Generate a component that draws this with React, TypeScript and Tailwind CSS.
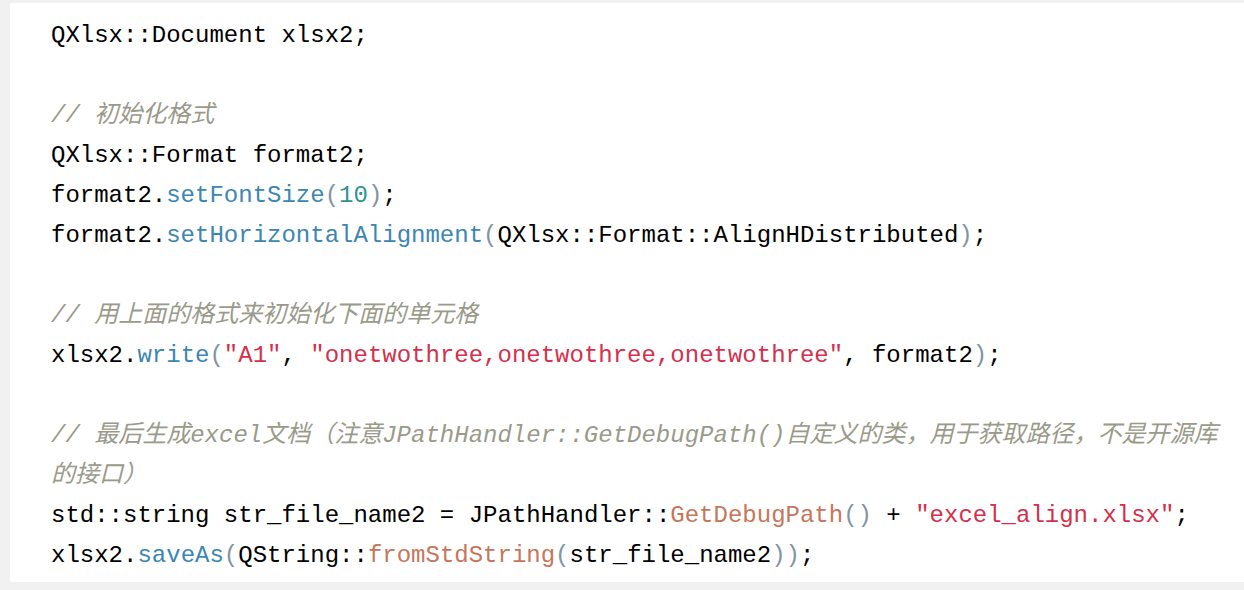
type Tok = [string, string?]

const C = {
  fn: "text-[#3b86b3]",
  num: "text-[#2f9490]",
  str: "text-[#d4304c]",
  call: "text-[#c6765a]",
  punc: "text-[#8094a4]",
  cm: "text-[#9a9a8a] italic",
}

const lines: Tok[][] = [
  [["QXlsx::Document xlsx2;"]],
  [],
  [["// 初始化格式", C.cm]],
  [["QXlsx::Format format2;"]],
  [["format2."], ["setFontSize", C.fn], ["(", C.punc], ["10", C.num], [")", C.punc], [";"]],
  [
    ["format2."],
    ["setHorizontalAlignment", C.fn],
    ["(", C.punc],
    ["QXlsx::Format::AlignHDistributed"],
    [")", C.punc],
    [";"],
  ],
  [],
  [["// 用上面的格式来初始化下面的单元格", C.cm]],
  [
    ["xlsx2."],
    ["write", C.fn],
    ["(", C.punc],
    ['"A1"', C.str],
    [", "],
    ['"onetwothree,onetwothree,onetwothree"', C.str],
    [", format2"],
    [")", C.punc],
    [";"],
  ],
  [],
  [["// 最后生成excel文档（注意JPathHandler::GetDebugPath()自定义的类，用于获取路径，不是开源库", C.cm]],
  [["的接口）", C.cm]],
  [
    ["std::string str_file_name2 = JPathHandler::"],
    ["GetDebugPath", C.call],
    ["()", C.punc],
    [" + "],
    ['"excel_align.xlsx"', C.str],
    [";"],
  ],
  [
    ["xlsx2."],
    ["saveAs", C.fn],
    ["(", C.punc],
    ["QString::"],
    ["fromStdString", C.call],
    ["(", C.punc],
    ["str_file_name2"],
    ["))", C.punc],
    [";"],
  ],
]

export default function App() {
  return (
    <div className="w-[1244px] h-[590px] bg-[#f1f1f1] pt-[3px] pl-[10px] overflow-hidden">
      <div
        className="bg-white h-[579px] pl-[41px] pt-[13px] text-[24px] leading-[40px] text-black whitespace-pre"
        style={{ fontFamily: '"Liberation Mono", "Noto Sans CJK SC", monospace' }}
      >
        {lines.map((toks, i) => (
          <div key={i} className="h-[40px]">
            {toks.map(([text, cls], j) => (
              <span key={j} className={cls}>
                {text}
              </span>
            ))}
          </div>
        ))}
      </div>
    </div>
  )
}
